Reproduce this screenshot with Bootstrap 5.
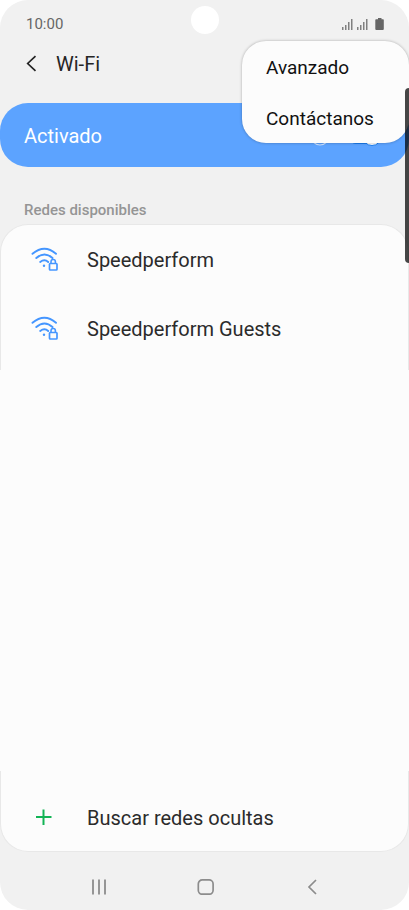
<!DOCTYPE html>
<html lang="es">
<head>
<meta charset="utf-8">
<meta name="viewport" content="width=device-width, initial-scale=1">
<title>Wi-Fi</title>
<link href="https://cdn.jsdelivr.net/npm/bootstrap@5.3.0/dist/css/bootstrap.min.css" rel="stylesheet">
<style>
  body { font-family: Roboto, "Liberation Sans", sans-serif; background: #fff; color: #2b2b2b; }
  svg { display: block; flex: none; }
  .screen { background: #f1f1f1; border-radius: 28px; }
  .statusbar { height: 40px; padding: 9px 24px 0 26px; color: #666; font-size: 15px; line-height: 31px; }
  .camera { width: 28px; height: 28px; top: 6px; background: #fff; }
  .titlebar { height: 48px; padding-left: 24px; gap: 16px; }
  .titlebar h1 { font-size: 20px; line-height: 24px; font-weight: 400; color: #252525; }
  .plain { background: none; border: 0; padding: 0; color: inherit; }
  .onbar { height: 64px; margin-top: 15px; padding: 2px 27px 0 24px; background: #5ca3ff; border-radius: 28px; color: #fff; font-size: 20px; }
  .info { margin-right: 18px; }
  .onbar .form-check { min-height: 0; }
  .onbar .form-check-input { width: 34px; height: 16px; margin: 0; background-color: #1a7df0; border-color: #1a7df0; }
  .knob { width: 20px; height: 20px; right: 0; top: -2px; background: #fff; border: 1px solid #1a7df0; pointer-events: none; }
  .section-label { margin: 32px 24px 3px; font-size: 15px; line-height: 22px; font-weight: 500; color: #959595; }
  .panel { background: #fcfcfc; }
  .panel-top { border: 1px solid #e8e8e8; border-bottom: 0; border-radius: 28px 28px 0 0; padding-bottom: 6px; }
  .panel-end { border: 1px solid #e8e8e8; border-top: 0; border-radius: 0 0 28px 28px; padding-top: 14px; }
  .net-row { height: 70px; padding-left: 30px; gap: 29px; font-size: 20px; line-height: 24px; text-align: left; }
  .panel-end .net-row { height: 66px; }
  .panel-top .net-row:first-child { height: 69px; }
  .bottombar { height: 58px; padding: 11px 75px 0 77px; color: #8c8c8c; }
  .bottombar button { width: 44px; height: 44px; }
  .popup { display: block; top: 41px; right: 0; width: 167px; padding: 1px 0 0; background: #fcfcfc; border: 0; border-radius: 24px; box-shadow: 0 0 3px rgba(0,0,0,.3); overflow: hidden; }
  .popup .dropdown-item { height: 51px; padding: 0 24px; font-size: 19px; line-height: 51px; color: #111; }
  .popup .dropdown-item:last-child { height: 50px; }
  .sidekey { width: 4px; height: 175px; top: 88px; right: 0; background: rgba(0,0,0,.72); border-radius: 4px 0 0 4px; z-index: 1001; }
</style>
</head>
<body>
<main class="screen position-relative d-flex flex-column min-vh-100 overflow-hidden">
  <div class="statusbar d-flex justify-content-between align-items-center">
    <span>10:00</span>
    <svg width="44" height="14" viewBox="0 0 44 14" fill="#666" role="img" aria-label="Señal y batería">
      <path fill="#808080" d="M1 9h1.500v3H1zM4 7h1.500v5H4zM7 4h1.500v8H7zM10 1h1.500v11H10zM16 9h1.500v3H16zM19 7h1.500v5H19zM22 4h1.500v8H22zM25 1h1.500v11H25z" />
      <path d="M37 0h3.500V1.200H42q.8 0 .8.800V11q0 1-1 1h-6.500q-1 0-1-1V2q0-.8.800-.8H37z"/>
    </svg>
  </div>
  <span class="camera position-absolute start-50 translate-middle-x rounded-circle"></span>
  <header class="titlebar d-flex align-items-center">
    <button class="plain" type="button" aria-label="Atrás"><svg width="16" height="20" viewBox="0 0 16 20" fill="none" stroke="#252525" stroke-width="1.700"><path d="M11.500 2.200 3.700 9.500l7.800 7.300"/></svg></button>
    <h1 class="mb-0">Wi-Fi</h1>
  </header>
  <div class="onbar d-flex align-items-center">
    <label for="wifi" class="me-auto">Activado</label>
    <svg class="info" width="20" height="20" viewBox="0 0 20 20" fill="none" stroke="#c9e0ff" stroke-width="1.200"><circle cx="10" cy="10" r="9"/><path d="M10 9v5M10 5v2"/></svg>
    <div class="form-check form-switch position-relative d-flex p-0 m-0">
      <input class="form-check-input" type="checkbox" role="switch" id="wifi" checked>
      <span class="knob position-absolute rounded-circle"></span>
    </div>
  </div>
  <h2 class="section-label">Redes disponibles</h2>
  <section class="d-flex flex-column flex-grow-1">
    <div class="panel panel-top">
      <button class="plain net-row w-100 d-flex align-items-center" type="button">
        <svg width="27" height="26" viewBox="0 0 27 26" fill="none" stroke="#4596ff" stroke-width="1.900" stroke-linecap="round"><path d="M1.500 6.800Q13.500-3.200 25 6.800M5.300 11Q13.500 3.800 21.500 11M9.200 15Q13.500 11.600 17.200 15"/><circle cx="13" cy="18.700" r="1.200" fill="#4596ff" stroke="none"/><rect x="18.500" y="16.500" width="7.500" height="6.500" rx=".8" stroke-width="1.700"/><path d="M20 16v-1.300a2.200 2.200 0 0 1 4.400 0V16" stroke-width="1.600"/></svg>
        <span>Speedperform</span>
      </button>
      <button class="plain net-row w-100 d-flex align-items-center" type="button">
        <svg width="27" height="26" viewBox="0 0 27 26" fill="none" stroke="#4596ff" stroke-width="1.900" stroke-linecap="round"><path d="M1.500 6.800Q13.500-3.200 25 6.800M5.300 11Q13.500 3.800 21.500 11M9.200 15Q13.500 11.600 17.200 15"/><circle cx="13" cy="18.700" r="1.200" fill="#4596ff" stroke="none"/><rect x="18.500" y="16.500" width="7.500" height="6.500" rx=".8" stroke-width="1.700"/><path d="M20 16v-1.300a2.200 2.200 0 0 1 4.400 0V16" stroke-width="1.600"/></svg>
        <span>Speedperform Guests</span>
      </button>
    </div>
    <div class="panel flex-grow-1"></div>
    <div class="panel panel-end">
      <button class="plain net-row w-100 d-flex align-items-center" type="button">
        <svg width="27" height="26" viewBox="0 0 27 26" fill="none" stroke="#12b455" stroke-width="2"><path d="M5 12h15.500M12.500 4.500V20"/></svg>
        <span>Buscar redes ocultas</span>
      </button>
    </div>
  </section>
  <nav class="bottombar d-flex justify-content-between" aria-label="Navegación">
    <button class="plain d-flex justify-content-center pt-3" type="button" aria-label="Recientes"><svg width="16" height="16" viewBox="0 0 16 16" fill="none" stroke="currentColor" stroke-width="1.800"><path d="M2 .5v15M8 .5v15M14 .5v15"/></svg></button>
    <button class="plain d-flex justify-content-center pt-3" type="button" aria-label="Inicio"><svg width="18" height="16" viewBox="0 0 18 16" fill="none" stroke="currentColor" stroke-width="1.700"><rect x="1.300" y=".9" width="14.800" height="14.300" rx="4"/></svg></button>
    <button class="plain d-flex justify-content-center pt-3" type="button" aria-label="Volver"><svg width="16" height="16" viewBox="0 0 16 16" fill="none" stroke="currentColor" stroke-width="1.700"><path d="M12 1 5 8l7 7"/></svg></button>
  </nav>
  <div class="popup dropdown-menu">
    <button class="dropdown-item" type="button">Avanzado</button>
    <button class="dropdown-item" type="button">Contáctanos</button>
  </div>
  <span class="sidekey position-absolute"></span>
</main>
<script src="https://cdn.jsdelivr.net/npm/bootstrap@5.3.0/dist/js/bootstrap.bundle.min.js"></script>
</body>
</html>
